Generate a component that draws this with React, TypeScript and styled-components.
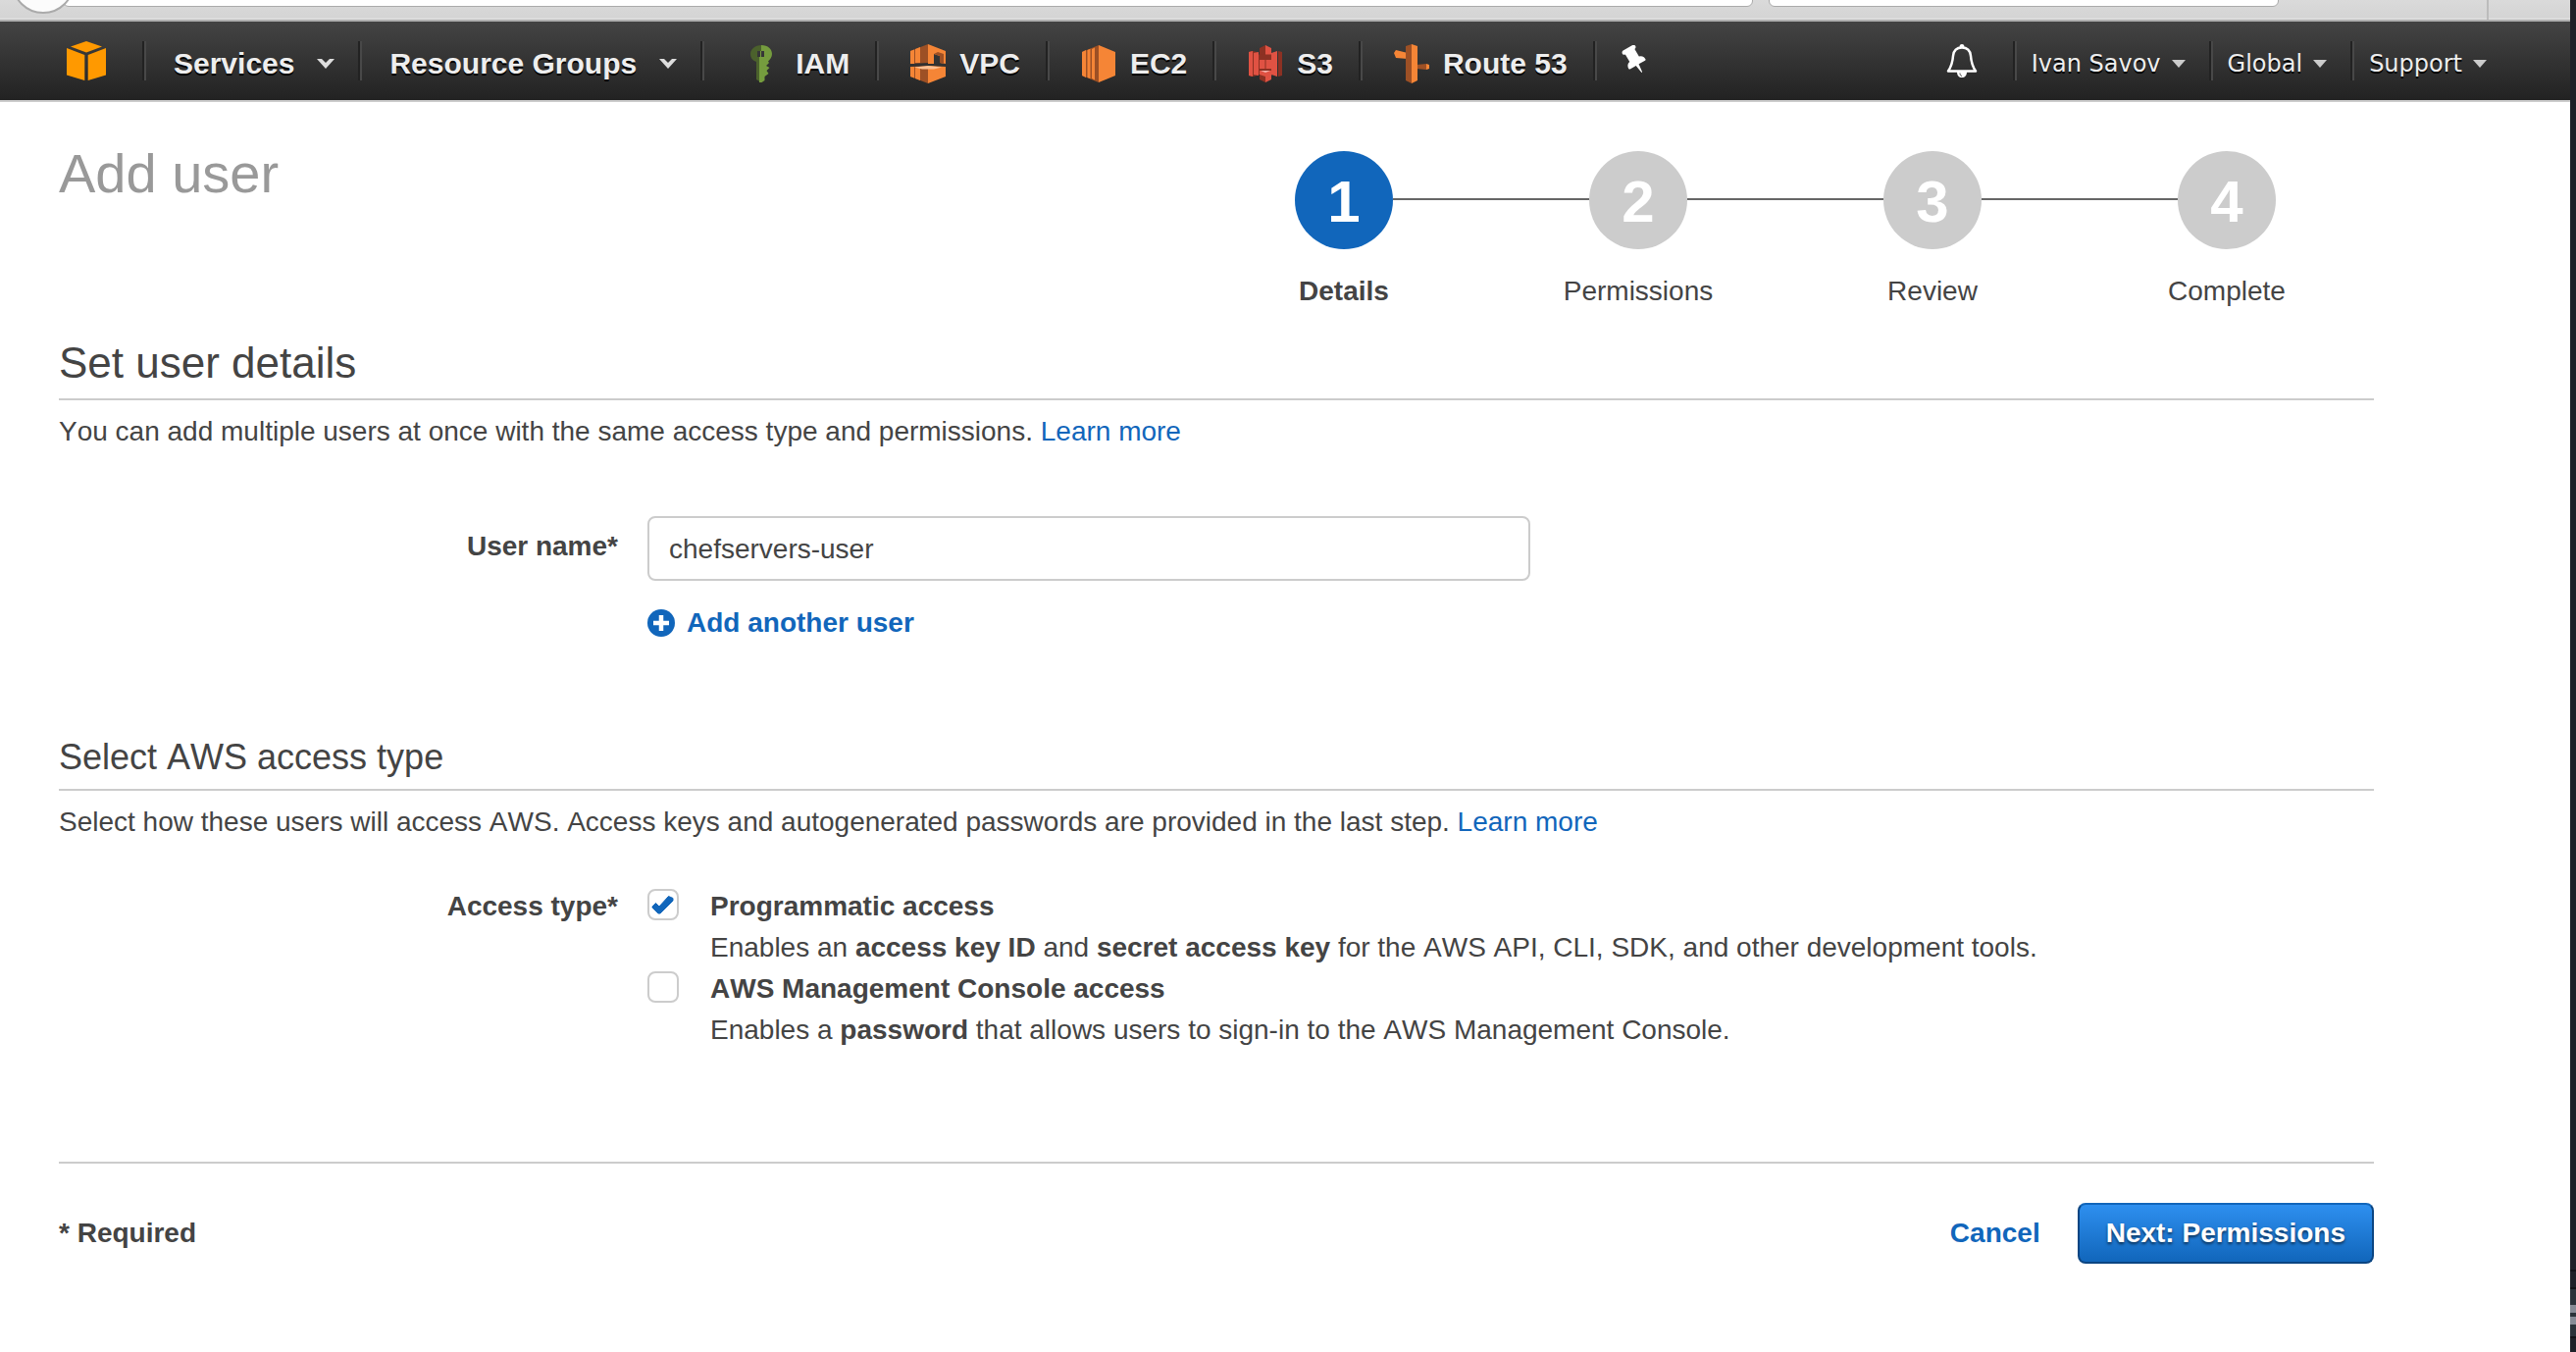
import React, { useState } from "react";
import styled, { createGlobalStyle } from "styled-components";

const sans = `"Liberation Sans", Arial, Helvetica, sans-serif`;

const GlobalStyle = createGlobalStyle`
  *, *::before, *::after { box-sizing: border-box; }
  body { margin: 0; background: #fff; color: #444; font: 28px/42px ${sans}; }
  body, button, input { font-kerning: none; }
  h1, h2, h3, p, ol, ul { margin: 0; padding: 0; font-weight: normal; }
  ol, ul { list-style: none; }
  svg { display: block; flex: none; }
`;

/* ---------- window frame ---------- */

const Frame = styled.div`
  display: flex;
  min-height: 100vh;
`;

const Browser = styled.div`
  flex: 1;
  min-width: 0;
`;

const Behind = styled.div`
  flex: none;
  display: flex;
  flex-direction: column;
  width: 6px;
  background: #1e2028;
`;

const BehindFill = styled.div`
  flex: 1;
`;

const BehindRow = styled.div<{ $h: number; $c: string }>`
  height: ${(p) => p.$h}px;
  background: ${(p) => p.$c};
`;

const Chrome = styled.div`
  display: flex;
  align-items: flex-end;
  height: 22px;
  padding-left: 12px;
  overflow: hidden;
  background: linear-gradient(#dadada, #d4d4d4 18px, #dcdcdc 18px);
  border-bottom: 2px solid #b0b0b0;
`;

const BackCircle = styled.div`
  position: relative;
  z-index: 1;
  flex: none;
  width: 64px;
  height: 64px;
  margin-bottom: 6px;
  background: #fcfcfc;
  border: 2px solid #aaa;
  border-radius: 50%;
`;

const Field = styled.div<{ $grow: number; $gap: number }>`
  flex: ${(p) => p.$grow} 1 0;
  height: 40px;
  margin: 0 0 13px ${(p) => p.$gap}px;
  background: #fff;
  border: 1px solid #aaa;
  border-radius: 6px;
`;

const ChromeEnd = styled.div`
  flex: none;
  width: 297px;
  height: 20px;
  padding-left: 212px;

  &::before {
    content: "";
    display: block;
    width: 2px;
    height: 20px;
    background: #bcbcbc;
  }
`;

/* ---------- navigation ---------- */

const Nav = styled.nav`
  display: flex;
  align-items: center;
  height: 82px;
  padding: 0 61px 0 68px;
  background: linear-gradient(#444, #222);
  border-bottom: 2px solid #ccc;
`;

const NavGroup = styled.ul`
  display: flex;
  align-items: center;
`;

const Spacer = styled.div`
  flex: 1;
`;

const NavItem = styled.li`
  display: flex;
  align-items: center;
  height: 40px;
  border-left: 2px solid #222;
  box-shadow: inset 2px 0 #484848;
`;

const Home = styled.a`
  margin-right: 37px;
`;

const MenuButton = styled.button`
  display: flex;
  align-items: center;
  gap: 23px;
  padding: 5px 24px 0 30px;
  border: 0;
  background: none;
  color: #eee;
  font: bold 30px/40px ${sans};
  text-shadow: 0 2px #000;
`;

const Shortcut = styled.a`
  display: flex;
  align-items: center;
  gap: 14px;
  padding: 5px 26px 0 34px;
  color: #eee;
  font: bold 30px/40px ${sans};
  text-decoration: none;
  text-shadow: 0 2px #000;
`;

const AccountButton = styled.button`
  display: flex;
  align-items: center;
  gap: 11px;
  padding: 5px 24px 0 17px;
  border: 0;
  background: none;
  color: #eee;
  font: 24px/40px "DejaVu Sans", Verdana, sans-serif;
  text-shadow: 0 2px #000;
`;

const IconButton = styled.button<{ $w: number }>`
  display: flex;
  align-items: center;
  justify-content: center;
  width: ${(p) => p.$w}px;
  height: 40px;
  padding: 0;
  border: 0;
  background: none;
`;

/* ---------- page ---------- */

const Main = styled.main`
  padding: 42px 200px 40px 60px;
`;

const Header = styled.header`
  display: flex;
  justify-content: space-between;
`;

const Title = styled.h1`
  color: #999;
  font-size: 56px;
  line-height: 62px;
`;

const Steps = styled.ol`
  display: grid;
  grid-template-columns: repeat(4, 300px);
  padding-top: 8px;
`;

const Step = styled.li<{ $active: boolean }>`
  display: flex;
  flex-direction: column;
  gap: 22px;
  text-align: center;
  font-weight: ${(p) => (p.$active ? "bold" : "normal")};
`;

const Track = styled.div`
  display: flex;
  align-items: center;
`;

const Rail = styled.span<{ $on: boolean }>`
  flex: 1;
  height: 2px;
  margin-bottom: 2px;
  background: ${(p) => (p.$on ? "#666" : "transparent")};
`;

const Bubble = styled.span<{ $active: boolean }>`
  width: 100px;
  height: 100px;
  border-radius: 50%;
  background: ${(p) => (p.$active ? "#1166bb" : "#ccc")};
  color: #fff;
  font: bold 60px/104px ${sans};
`;

const Heading = styled.h2`
  margin-top: 26px;
  padding-bottom: 10px;
  border-bottom: 2px solid #ccc;
  font-size: 44px;
  line-height: 52px;
`;

const SubHeading = styled.h3`
  margin-top: 94px;
  padding-bottom: 10px;
  border-bottom: 2px solid #ccc;
  font-size: 36px;
  line-height: 44px;
`;

const Intro = styled.p`
  margin-top: 11px;
`;

const Link = styled.a`
  color: #1166bb;
  text-decoration: none;
`;

const FormRow = styled.div<{ $top: number }>`
  display: grid;
  grid-template-columns: 570px minmax(0, 1fr);
  column-gap: 30px;
  margin-top: ${(p) => p.$top}px;
`;

const Label = styled.label`
  padding-top: 10px;
  text-align: right;
  font-weight: bold;
`;

const GroupLabel = styled.div`
  text-align: right;
  font-weight: bold;
`;

const TextInput = styled.input`
  display: block;
  width: 100%;
  max-width: 900px;
  height: 66px;
  padding: 2px 20px 0;
  border: 2px solid #ccc;
  border-radius: 8px;
  background: #fff;
  color: #444;
  font: 28px/42px ${sans};
`;

const AddButton = styled.button`
  display: flex;
  align-items: center;
  gap: 12px;
  margin-top: 22px;
  padding: 0;
  border: 0;
  background: none;
  color: #1166bb;
  font: bold 28px/42px ${sans};
`;

const Option = styled.div`
  display: grid;
  grid-template-columns: 32px minmax(0, 1fr);
  column-gap: 32px;
`;

const OptionLabel = styled.label`
  display: block;
  font-weight: bold;
`;

const TickBox = styled.div`
  display: grid;
  align-content: start;
  padding-top: 3px;

  & > * {
    grid-area: 1 / 1;
  }

  svg {
    pointer-events: none;
  }
`;

const Check = styled.input`
  appearance: none;
  width: 32px;
  height: 32px;
  margin: 0;
  border: 2px solid #ccc;
  border-radius: 8px;
  background: #fff;
`;

const Footer = styled.footer`
  display: flex;
  align-items: center;
  justify-content: space-between;
  margin-top: 113px;
  padding-top: 40px;
  border-top: 2px solid #ccc;
  font-weight: bold;
`;

const Actions = styled.div`
  display: flex;
  align-items: center;
  gap: 38px;
`;

const Primary = styled.button`
  height: 62px;
  padding: 0 27px;
  border: 2px solid #0b4582;
  border-top-color: #1166bb;
  border-radius: 8px;
  background: linear-gradient(#2e8fef, #1166bb);
  color: #fff;
  font: bold 28px/42px ${sans};
  text-shadow: 0 2px 3px rgba(0, 0, 0, 0.6);
`;

/* ---------- drawings ---------- */

const CubeLogo = () => (
  <svg width="40" height="40" viewBox="0 0 40 40" fill="#ff9900">
    <path d="M20 0 36 5.5 20 11.5 4 5.5Z" />
    <path d="M0 7 18.3 14V40L0 34.5Z" />
    <path d="M40 7 21.7 14V40L40 34.5Z" />
  </svg>
);

const Chevron = () => (
  <svg width="18" height="10" viewBox="0 0 18 10">
    <path d="M0 0h5l4 4 4-4h5L9 10Z" fill="#ddd" />
  </svg>
);

const SmallCaret = () => (
  <svg width="14" height="8" viewBox="0 0 14 8">
    <path d="M0 0H14L7 8Z" fill="#ccc" />
  </svg>
);

const KeyIcon = () => (
  <svg width="47" height="38" viewBox="-15 0 47 38">
    <path fill="#4b612c" fillRule="evenodd" d="M11 0C5 0 0 4 0 9c0 4 2 6.5 6 8v18l5 3V0ZM7 6h4v6H7Z" />
    <path
      fill="#759c3e"
      fillRule="evenodd"
      d="M11 0c7 0 11 4 11 9 0 3-2 6-4 7.500l1 1.500-3 3 3.500 2-3 3 2 3-4 3v4l-3 2H9V12h2ZM10 6h4v6h-4Z"
    />
  </svg>
);

const VpcIcon = () => (
  <svg width="36" height="40" viewBox="0 0 36 40">
    <path fill="#9d5025" d="M18 0V19L0 20V7Z" />
    <path fill="#f58536" d="M18 0 36 7V20L30 19V12l-6-2v10h-6ZM0 7l4-1.500v14.500H0ZM5 5l5-2v16H5Z" />
    <path fill="#9d5025" d="M24 10 30 12V19l4 1V10l-6-2Z" />
    <path fill="#333" d="M24 12l4 1v7h-4Z" />
    <path fill="#9d5025" d="M0 23 18 22V40L0 33Z" />
    <path fill="#f58536" d="M18 22 36 23V33L18 40ZM0 23h4v11.500L0 33ZM5 23h5v14l-5-2Z" />
    <path fill="#fbbf93" d="M4 23.500 18 22 32 23.500 24 25.500H12Z" />
  </svg>
);

const Ec2Icon = () => (
  <svg width="36" height="38" viewBox="0 0 36 38">
    <path fill="#9d5025" d="M18 0V38L1 31V7Z" />
    <path fill="#f58536" d="M18 0 35 7V31L18 38ZM1 7l4-2v28l-4-2ZM6.500 5l3-1.200v30.400l-3-1.200ZM11 4l3-1.500v33L11 34Z" />
  </svg>
);

const S3Icon = () => (
  <svg width="36" height="38" viewBox="-1 0 36 38">
    <path fill="#8c3123" d="M0 7 4 6 10 7.500V30.500L4 32 0 31ZM17 0 11 3V11h6ZM17 38l-6-3V27h6ZM34 7l-4-1v26l4-1Z" />
    <path fill="#e05243" d="M0 7 4 6V32L0 31ZM5 8l5-1v24l-5-1ZM17 0l6 3v8h-6ZM17 38l6-3V27h-6ZM23 8l6-2v26l-6-2Z" />
    <path fill="#8c3123" d="M10 9.500h13V30H10Z" />
    <path fill="#e05243" d="M11 15h5.500v9H11ZM17.500 15H23v9h-5.500ZM11 26h12v4l-6 2-6-2Z" />
    <path fill="#f2b0a9" d="M12 26h10l-5 2Z" />
  </svg>
);

const RouteIcon = () => (
  <svg width="36" height="40" viewBox="0 0 36 40">
    <path fill="#f58536" d="M0 9 2 6l12 3v6L2 14Z" />
    <path fill="#9d5025" d="M12 2 18 0V40l-6-3ZM23 21l10-1v6l-10-1Z" />
    <path fill="#f58536" d="M18 0 24 2V37l-6 3ZM33 20l3 1v4l-3 1Z" />
  </svg>
);

const PinIcon = () => (
  <svg width="32" height="32" viewBox="-352 -1480 1856 1712" fill="#fff">
    <g transform="rotate(-30 576 -624) scale(1 -1)">
      <path d="M480 864v-448q0-14-9-23t-23-9t-23 9t-9 23v448q0 14 9 23t23 9t23-9t9-23zM1152 416q0-26-19-45t-45-19h-429l-51-483q-2-12-10.500-20.500t-20.500-8.500h-1q-27 0-32 27l-76 485h-404q-26 0-45 19t-19 45q0 123 78.500 221.500t177.500 98.500v512q-52 0-90 38t-38 90t38 90t90 38h640q52 0 90-38t38-90t-38-90t-90-38v-512q99 0 177.500-98.500t78.500-221.500z" />
    </g>
  </svg>
);

const BellIcon = () => (
  <svg width="32" height="34" viewBox="0 0 32 34" fill="none">
    <path
      d="M16 3.500C10 3.500 7.500 7 7 12c-.5 7-2 11-5 15.500h28C27 23 25.500 19 25 12c-.5-5-3-8.500-9-8.500Z"
      stroke="#fff"
      strokeWidth="2.500"
      strokeLinejoin="round"
    />
    <path d="M13.500 3a2.500 3 0 0 1 5 0ZM11 28h10c0 4-2 6-5 6s-5-2-5-6Z" fill="#fff" />
    <path d="M14 29.500c0 1.500.5 2.500 2 3" stroke="#444" />
  </svg>
);

const PlusIcon = () => (
  <svg width="28" height="28" viewBox="0 0 28 28">
    <circle cx="14" cy="14" r="14" fill="#1166bb" />
    <path d="M14 6v16M6 14h16" stroke="#fff" strokeWidth="4.500" />
  </svg>
);

const TickIcon = () => (
  <svg width="32" height="32" viewBox="0 0 32 32">
    <path d="M5 18 8.500 14.500 12 18 21.500 7.500 26 9.500V12L13 25H11L5 19Z" fill="#1166bb" stroke="#1166bb" strokeLinejoin="round" />
  </svg>
);

/* ---------- content ---------- */

const shortcuts = [
  { name: "IAM", Icon: KeyIcon },
  { name: "VPC", Icon: VpcIcon },
  { name: "EC2", Icon: Ec2Icon },
  { name: "S3", Icon: S3Icon },
  { name: "Route 53", Icon: RouteIcon },
];

const steps = ["Details", "Permissions", "Review", "Complete"];

function AccessOption(props: { id: string; title: string; initial: boolean; children: React.ReactNode }) {
  const [on, setOn] = useState(props.initial);
  return (
    <Option>
      <TickBox>
        <Check id={props.id} type="checkbox" checked={on} onChange={() => setOn(!on)} />
        {on && <TickIcon />}
      </TickBox>
      <div>
        <OptionLabel htmlFor={props.id}>{props.title}</OptionLabel>
        <p>{props.children}</p>
      </div>
    </Option>
  );
}

export default function App() {
  const [name, setName] = useState("chefservers-user");
  return (
    <Frame>
      <GlobalStyle />
      <Browser>
        <Chrome>
          <BackCircle />
          <Field $grow={1724} $gap={-12} />
          <Field $grow={519} $gap={16} />
          <ChromeEnd />
        </Chrome>
        <Nav>
          <Home href="#" aria-label="Home">
            <CubeLogo />
          </Home>
          <NavGroup>
            {["Services", "Resource Groups"].map((label) => (
              <NavItem key={label}>
                <MenuButton>
                  {label}
                  <Chevron />
                </MenuButton>
              </NavItem>
            ))}
            {shortcuts.map(({ name: label, Icon }) => (
              <NavItem key={label}>
                <Shortcut href="#">
                  <Icon />
                  {label}
                </Shortcut>
              </NavItem>
            ))}
            <NavItem>
              <IconButton $w={82} aria-label="Edit shortcuts">
                <PinIcon />
              </IconButton>
            </NavItem>
          </NavGroup>
          <Spacer />
          <IconButton $w={104} aria-label="Notifications">
            <BellIcon />
          </IconButton>
          <NavGroup>
            {["Ivan Savov", "Global", "Support"].map((label) => (
              <NavItem key={label}>
                <AccountButton>
                  {label}
                  <SmallCaret />
                </AccountButton>
              </NavItem>
            ))}
          </NavGroup>
        </Nav>
        <Main>
          <Header>
            <Title>Add user</Title>
            <Steps>
              {steps.map((label, i) => (
                <Step key={label} $active={i === 0}>
                  <Track>
                    <Rail $on={i > 0} />
                    <Bubble $active={i === 0}>{i + 1}</Bubble>
                    <Rail $on={i < steps.length - 1} />
                  </Track>
                  <span>{label}</span>
                </Step>
              ))}
            </Steps>
          </Header>

          <Heading>Set user details</Heading>
          <Intro>
            You can add multiple users at once with the same access type and permissions. <Link href="#">Learn more</Link>
          </Intro>
          <FormRow $top={65}>
            <Label htmlFor="user-name">User name*</Label>
            <div>
              <TextInput id="user-name" type="text" value={name} onChange={(e) => setName(e.target.value)} />
              <AddButton>
                <PlusIcon />
                Add another user
              </AddButton>
            </div>
          </FormRow>

          <SubHeading>Select AWS access type</SubHeading>
          <Intro>
            Select how these users will access AWS. Access keys and autogenerated passwords are provided in the last step.{" "}
            <Link href="#">Learn more</Link>
          </Intro>
          <FormRow $top={44} role="group" aria-labelledby="access-type">
            <GroupLabel id="access-type">Access type*</GroupLabel>
            <div>
              <AccessOption id="programmatic" title="Programmatic access" initial={true}>
                Enables an <b>access key ID</b> and <b>secret access key</b> for the AWS API, CLI, SDK, and other development tools.
              </AccessOption>
              <AccessOption id="console" title="AWS Management Console access" initial={false}>
                Enables a <b>password</b> that allows users to sign-in to the AWS Management Console.
              </AccessOption>
            </div>
          </FormRow>

          <Footer>
            <span>* Required</span>
            <Actions>
              <Link href="#">Cancel</Link>
              <Primary>Next: Permissions</Primary>
            </Actions>
          </Footer>
        </Main>
      </Browser>
      <Behind>
        <BehindFill />
        <BehindRow $h={2} $c="#111217" />
        <BehindRow $h={16} $c="#1e2028" />
        <BehindRow $h={2} $c="#111217" />
        <BehindRow $h={16} $c="#2a323a" />
        <BehindRow $h={8} $c="#868b96" />
        <BehindRow $h={4} $c="#2a323a" />
        <BehindRow $h={8} $c="#868b96" />
        <BehindRow $h={12} $c="#2a323a" />
        <BehindRow $h={2} $c="#111217" />
        <BehindRow $h={14} $c="#1e2028" />
      </Behind>
    </Frame>
  );
}
